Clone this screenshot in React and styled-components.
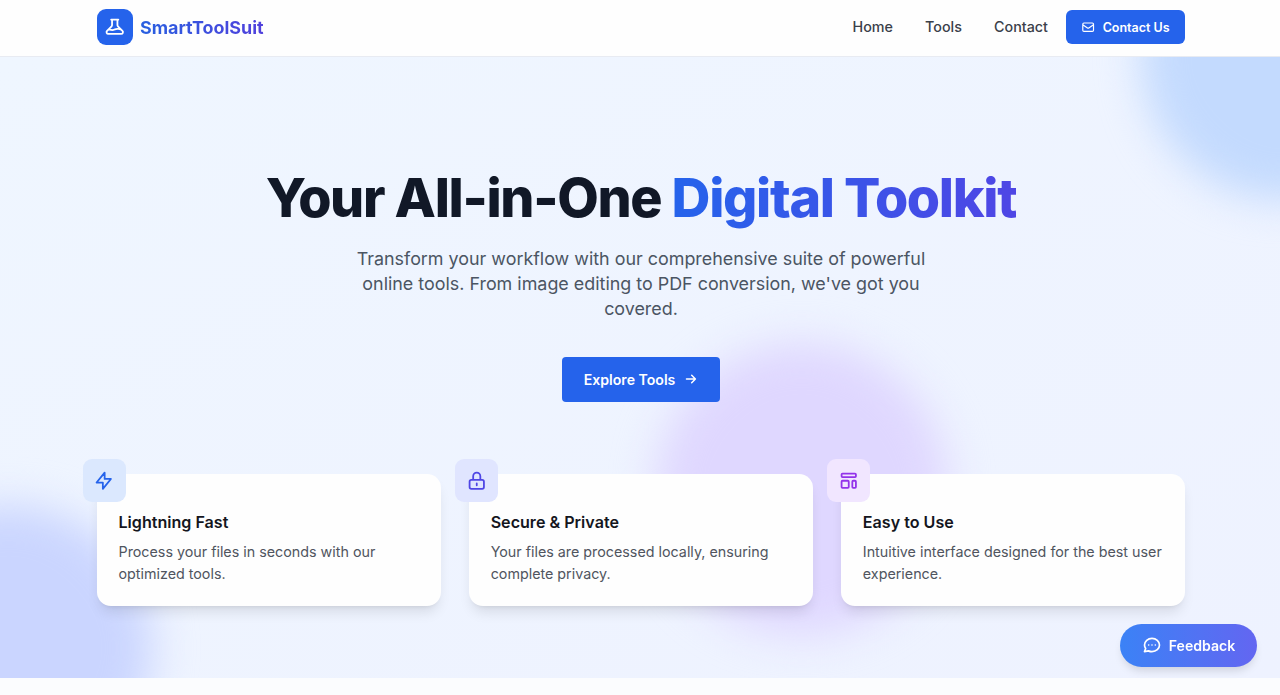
import styled, { createGlobalStyle, css } from "styled-components";

const GlobalStyle = createGlobalStyle`
  * {
    box-sizing: border-box;
  }
  body {
    margin: 0;
    overflow: hidden;
    background-color: #fbfcfe;
    font-family: Inter, "Liberation Sans", sans-serif;
    -webkit-font-smoothing: antialiased;
  }
  h1, h2, p {
    margin: 0;
  }
`;

const icons = {
  beaker:
    "M19.428 15.428a2 2 0 00-1.022-.547l-2.387-.477a6 6 0 00-3.86.517l-.318.158a6 6 0 01-3.86.517L6.05 15.21a2 2 0 00-1.806.547M8 4h8l-1 1v5.172a2 2 0 00.586 1.414l5 5c1.26 1.26.367 3.414-1.415 3.414H4.828c-1.782 0-2.674-2.154-1.414-3.414l5-5A2 2 0 009 10.172V5L8 4z",
  mail: "M3 8l7.89 5.26a2 2 0 002.22 0L21 8M5 19h14a2 2 0 002-2V7a2 2 0 00-2-2H5a2 2 0 00-2 2v10a2 2 0 002 2z",
  arrow: "M13 7l5 5m0 0l-5 5m5-5H6",
  bolt: "M13 10V3L4 14h7v7l9-11h-7z",
  lock: "M12 15v2m-6 4h12a2 2 0 002-2v-6a2 2 0 00-2-2H6a2 2 0 00-2 2v6a2 2 0 002 2zm10-10V7a4 4 0 00-8 0v4h8z",
  template:
    "M4 5a1 1 0 011-1h14a1 1 0 011 1v2a1 1 0 01-1 1H5a1 1 0 01-1-1V5zM4 13a1 1 0 011-1h6a1 1 0 011 1v6a1 1 0 01-1 1H5a1 1 0 01-1-1v-6zM16 13a1 1 0 011-1h2a1 1 0 011 1v6a1 1 0 01-1 1h-2a1 1 0 01-1-1v-6z",
  chat: "M8 12h.01M12 12h.01M16 12h.01M21 12c0 4.418-4.03 8-9 8a9.863 9.863 0 01-4.255-.949L3 20l1.395-3.72C3.512 15.042 3 13.574 3 12c0-4.418 4.03-8 9-8s9 3.582 9 8z",
};

function Icon({ name, size }) {
  return (
    <svg
      width={size}
      height={size}
      viewBox="0 0 24 24"
      fill="none"
      stroke="currentColor"
      strokeWidth="2"
      strokeLinecap="round"
      strokeLinejoin="round"
    >
      <path d={icons[name]} />
    </svg>
  );
}

const features = [
  {
    icon: "bolt",
    title: "Lightning Fast",
    text: "Process your files in seconds with our optimized tools.",
    color: "#2563eb",
    tint: "#dbe8fe",
  },
  {
    icon: "lock",
    title: "Secure & Private",
    text: "Your files are processed locally, ensuring complete privacy.",
    color: "#4f46e5",
    tint: "#e0e5ff",
  },
  {
    icon: "template",
    title: "Easy to Use",
    text: "Intuitive interface designed for the best user experience.",
    color: "#9333ea",
    tint: "#f1e6ff",
  },
];

export default function App() {
  return (
    <>
      <GlobalStyle />
      <Header>
        <Brand>
          <Logo>
            <Icon name="beaker" size={21.5} />
          </Logo>
          <BrandName>SmartToolSuit</BrandName>
        </Brand>
        <Nav>
          <NavLink>Home</NavLink>
          <NavLink>Tools</NavLink>
          <NavLink>Contact</NavLink>
          <ContactBtn>
            <Icon name="mail" size={14.3} />
            Contact Us
          </ContactBtn>
        </Nav>
      </Header>
      <Hero>
        <Blob $color="#c3dafe" $x="1141px" $y="-143px" />
        <Blob $color="#cad5ff" $x="-134px" $y="448px" />
        <Blob $color="#dfd7ff" $x="656px" $y="286px" $size="292px" />
        <Title>
          Your All-in-One <span>Digital Toolkit</span>
        </Title>
        <Lead>
          Transform your workflow with our comprehensive suite of powerful
          online tools. From image editing to PDF conversion, we've got you
          covered.
        </Lead>
        <ExploreBtn>
          Explore Tools
          <Icon name="arrow" size={17.9} />
        </ExploreBtn>
        <Features>
          {features.map(({ icon, title, text, color, tint }) => (
            <Card key={icon}>
              <Badge $color={color} $tint={tint}>
                <Icon name={icon} size={21.5} />
              </Badge>
              <CardTitle>{title}</CardTitle>
              <CardText>{text}</CardText>
            </Card>
          ))}
        </Features>
      </Hero>
      <FeedbackBtn>
        <Icon name="chat" size={20} />
        Feedback
      </FeedbackBtn>
    </>
  );
}

const row = css`
  display: flex;
  align-items: center;
`;

const Header = styled.header`
  ${row}
  justify-content: space-between;
  height: 57px;
  padding: 0 95px 2px 97px;
  background-color: #fefefe;
  border-bottom: 1px solid #e8ebf2;
`;

const Brand = styled.div`
  ${row}
  gap: 7px;
`;

const Logo = styled.div`
  ${row}
  justify-content: center;
  width: 36px;
  height: 36px;
  border-radius: 9px;
  color: white;
  background-color: #2563eb;
`;

const gradientText = css`
  color: transparent;
  background-clip: text;
  -webkit-background-clip: text;
`;

const BrandName = styled.span`
  ${gradientText}
  background-image: linear-gradient(to right, #2860e0, #5040dc);
  font-size: 17.9px;
  font-weight: 700;
  line-height: 25px;
`;

const Nav = styled.nav`
  ${row}
`;

const NavLink = styled.a`
  margin-right: 32.2px;
  color: #3a404a;
  font-size: 14.3px;
  font-weight: 500;
  line-height: 18px;
  &:nth-of-type(3) {
    margin-right: 18px;
  }
`;

const ContactBtn = styled.button`
  ${row}
  justify-content: center;
  gap: 7px;
  width: 119px;
  height: 34px;
  padding: 0;
  border: none;
  border-radius: 6px;
  color: white;
  background-color: #2563eb;
  font: 600 12.5px Inter, sans-serif;
`;

const Hero = styled.section`
  ${row}
  position: relative;
  flex-direction: column;
  height: 621px;
  padding: 111px 95px 0 97px;
  overflow: hidden;
  background-image: linear-gradient(to bottom right, #eff6ff, #eef2ff);
`;

const Blob = styled.div`
  position: absolute;
  left: ${(p) => p.$x};
  top: ${(p) => p.$y};
  width: ${(p) => p.$size || "286px"};
  height: ${(p) => p.$size || "286px"};
  border-radius: 50%;
  background-color: ${(p) => p.$color};
  filter: blur(21px);
`;

const Title = styled.h1`
  position: relative;
  color: #111827;
  font-size: 53.8px;
  font-weight: 800;
  line-height: 60px;
  letter-spacing: -0.025em;
  white-space: nowrap;
  span {
    ${gradientText}
    padding-bottom: 8px;
    background-image: linear-gradient(to right, #2563eb, #4f46e5);
  }
`;

const Lead = styled.p`
  position: relative;
  width: 601px;
  margin-top: 18px;
  color: #4b5563;
  font-size: 17.9px;
  line-height: 25.05px;
  text-align: center;
`;

const ExploreBtn = styled.button`
  ${row}
  position: relative;
  justify-content: center;
  flex-shrink: 0;
  gap: 7px;
  width: 158px;
  height: 45px;
  margin-top: 36px;
  padding: 0 0 1px 2px;
  border: none;
  border-radius: 4px;
  color: white;
  background-color: #2563eb;
  font: 600 14.1px Inter, sans-serif;
`;

const Features = styled.div`
  position: relative;
  display: grid;
  grid-template-columns: repeat(3, 1fr);
  gap: 28.5px;
  width: 100%;
  margin-top: 71.5px;
`;

const Card = styled.article`
  position: relative;
  height: 132px;
  padding: 36px 21.5px 0;
  border-radius: 14px;
  background-color: #fefefe;
  box-shadow: 0 9px 13px -3px rgba(0, 0, 0, 0.1),
    0 4px 5px -4px rgba(0, 0, 0, 0.1);
`;

const Badge = styled.div`
  ${row}
  position: absolute;
  top: -14.3px;
  left: -14.3px;
  justify-content: center;
  width: 43px;
  height: 43px;
  border-radius: 9px;
  color: ${(p) => p.$color};
  background-color: ${(p) => p.$tint};
`;

const CardTitle = styled.h2`
  color: #14161d;
  font-size: 16.1px;
  font-weight: 600;
  line-height: 25px;
`;

const CardText = styled.p`
  margin-top: 6.5px;
  color: #50555f;
  font-size: 14.3px;
  line-height: 21.5px;
`;

// floats above the page in the bottom right corner
const FeedbackBtn = styled.button`
  ${row}
  position: fixed;
  right: 23px;
  bottom: 28px;
  justify-content: center;
  gap: 7px;
  width: 137px;
  height: 43px;
  padding: 0 0 1px;
  border: none;
  border-radius: 22px;
  color: white;
  background-image: linear-gradient(to right, #3b82f6, #6366f1);
  box-shadow: 0 6px 10px -3px rgba(0, 0, 0, 0.15);
  font: 600 14.1px Inter, sans-serif;
`;
